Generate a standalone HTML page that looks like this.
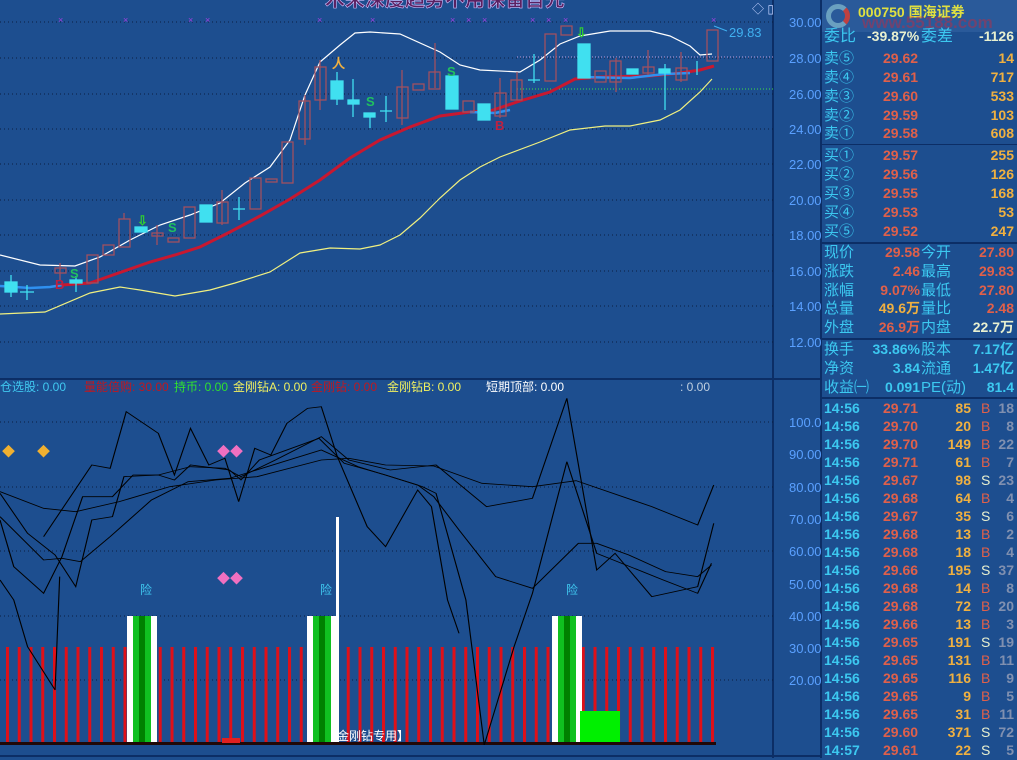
<!DOCTYPE html>
<html><head><meta charset="utf-8"><style>
*{margin:0;padding:0;box-sizing:border-box}
body{width:1017px;height:758px;background:#1d4e8f;overflow:hidden;position:relative;font-family:"Liberation Sans","Noto Sans CJK SC",sans-serif}
svg{position:absolute;left:0;top:0}
.p{position:absolute;left:821px;width:196px;font-size:14px;height:19px;line-height:19px;font-weight:bold}
.p span{position:absolute;white-space:nowrap}
.c{color:#3cc8f0}.r{color:#e0604a}.y{color:#f0b040}.w{color:#e8f0d0}.g{color:#8090b0}
</style></head><body>
<svg width="1017" height="758" viewBox="0 0 1017 758">
<defs>
<pattern id="rb" x="6" y="0" width="11.75" height="10" patternUnits="userSpaceOnUse"><rect x="0" y="0" width="3" height="10" fill="#e01018"/></pattern>
</defs>
<line x1="773" y1="0" x2="773" y2="758" stroke="#0c2e66" stroke-width="2"/>
<line x1="821" y1="0" x2="821" y2="758" stroke="#0c2e66" stroke-width="2"/>
<line x1="0" y1="379" x2="821" y2="379" stroke="#0c2e66" stroke-width="2"/>
<line x1="0" y1="756" x2="821" y2="756" stroke="#0c2e66" stroke-width="2"/>
<g stroke="#0a1e40" stroke-dasharray="1 3" stroke-width="1">
<line x1="0" y1="22" x2="773" y2="22"/><line x1="0" y1="58" x2="773" y2="58"/><line x1="0" y1="94" x2="773" y2="94"/><line x1="0" y1="129" x2="773" y2="129"/><line x1="0" y1="164" x2="773" y2="164"/><line x1="0" y1="200" x2="773" y2="200"/><line x1="0" y1="235" x2="773" y2="235"/><line x1="0" y1="271" x2="773" y2="271"/><line x1="0" y1="306" x2="773" y2="306"/><line x1="0" y1="342" x2="773" y2="342"/>
<line x1="0" y1="422" x2="773" y2="422"/><line x1="0" y1="487" x2="773" y2="487"/><line x1="0" y1="551" x2="773" y2="551"/><line x1="0" y1="616" x2="773" y2="616"/><line x1="0" y1="680" x2="773" y2="680"/>
</g>
<line x1="517" y1="57" x2="773" y2="57" stroke="#c0a0e0" stroke-dasharray="1 2"/>
<line x1="517" y1="89" x2="773" y2="89" stroke="#40e040" stroke-dasharray="1 2"/>
<g fill="#5aa0ff" font-size="13" font-family="Liberation Sans">
<text x="789" y="27">30.00</text><text x="789" y="63">28.00</text><text x="789" y="99">26.00</text><text x="789" y="134">24.00</text><text x="789" y="169">22.00</text><text x="789" y="205">20.00</text><text x="789" y="240">18.00</text><text x="789" y="276">16.00</text><text x="789" y="311">14.00</text><text x="789" y="347">12.00</text>
<text x="789" y="427">100.0</text><text x="789" y="459">90.00</text><text x="789" y="492">80.00</text><text x="789" y="524">70.00</text><text x="789" y="556">60.00</text><text x="789" y="589">50.00</text><text x="789" y="621">40.00</text><text x="789" y="653">30.00</text><text x="789" y="685">20.00</text>
</g>
<text x="752" y="13" fill="#c0d0ff" font-size="12">◇ ▯</text>
<text x="325" y="6" font-size="20" font-weight="bold" fill="#5a2060" stroke="#d0c0ff" stroke-width="0.6" font-family="Liberation Sans,Noto Sans CJK SC,sans-serif">木来深度趋势不用保留首先</text>
<g fill="#a040e0" font-size="9"><text x="58" y="23">×</text><text x="123" y="23">×</text><text x="188" y="23">×</text><text x="205" y="23">×</text><text x="317" y="23">×</text><text x="370" y="23">×</text><text x="450" y="23">×</text><text x="466" y="23">×</text><text x="482" y="23">×</text><text x="530" y="23">×</text><text x="546" y="23">×</text><text x="563" y="23">×</text><text x="711" y="23">×</text></g>
<polyline fill="none" stroke="#ffffff" stroke-width="1.2" points="0,255 40,265 75,266 100,257 130,240 160,225 190,215 220,203 245,183 270,167 290,140 305,95 320,62 340,45 355,33 370,32 400,34 440,52 460,65 480,70 520,72 540,60 560,44 580,36 610,31 650,31 670,36 690,46 700,55 712,54"/>
<polyline fill="none" stroke="#f0f080" stroke-width="1.2" points="0,314 45,312 90,293 120,287 140,290 175,296 210,290 235,283 270,272 300,253 330,248 360,249 380,245 400,235 420,218 440,198 460,180 480,167 500,157 540,142 570,130 605,126 630,126 660,120 680,110 700,92 712,79"/>
<polyline fill="none" stroke="#2f90f0" stroke-width="2.5" points="0,286 30,288 50,287 62,285"/>
<polyline fill="none" stroke="#c81830" stroke-width="3" points="62,285 90,283 110,276 150,262 175,255 200,247 230,232 260,216 290,199 320,180 350,158 380,140 410,127 440,116 470,112 490,111 520,101 550,92 575,79 600,77 650,76 680,73 700,70 714,66"/>
<polyline fill="none" stroke="#2f90f0" stroke-width="2.5" points="470,112 495,113 510,110"/><polyline fill="none" stroke="#2f90f0" stroke-width="2.5" points="580,77 630,78 665,74 690,73"/>
<g stroke="#a05060" stroke-width="1.3" fill="none">
<line x1="60" y1="263" x2="60" y2="280"/><rect x="55" y="268" width="11" height="5"/>
<rect x="87" y="255" width="11" height="28"/><rect x="103" y="245" width="11" height="10"/>
<rect x="119" y="219" width="11" height="28"/><line x1="124" y1="213" x2="124" y2="219"/>
<line x1="157" y1="225" x2="157" y2="245"/><rect x="152" y="233" width="11" height="3"/>
<rect x="168" y="238" width="11" height="4"/><rect x="184" y="207" width="11" height="31"/>
<line x1="222" y1="190" x2="222" y2="225"/><rect x="217" y="202" width="11" height="21"/>
<rect x="250" y="178" width="11" height="31"/><rect x="266" y="179" width="11" height="3"/>
<rect x="282" y="142" width="11" height="41"/><line x1="305" y1="95" x2="305" y2="145"/><rect x="299" y="101" width="11" height="38"/>
<line x1="320" y1="60" x2="320" y2="110"/><rect x="315" y="67" width="11" height="33"/>
<rect x="397" y="87" width="11" height="31"/><line x1="402" y1="70" x2="402" y2="125"/>
<rect x="413" y="84" width="11" height="6"/><line x1="435" y1="43" x2="435" y2="88"/><rect x="429" y="72" width="11" height="17"/>
<rect x="463" y="101" width="11" height="11"/><line x1="500" y1="78" x2="500" y2="118"/><rect x="495" y="93" width="11" height="23"/>
<line x1="517" y1="72" x2="517" y2="100"/><rect x="511" y="80" width="11" height="20"/>
<rect x="545" y="34" width="11" height="47"/><rect x="561" y="26" width="11" height="9"/>
<rect x="595" y="71" width="11" height="11"/><line x1="616" y1="58" x2="616" y2="92"/><rect x="610" y="61" width="11" height="21"/>
<line x1="648" y1="50" x2="648" y2="75"/><rect x="643" y="67" width="11" height="6"/>
<line x1="681" y1="52" x2="681" y2="82"/><rect x="676" y="68" width="11" height="12"/>
<rect x="707" y="30" width="11" height="31"/>
</g>
<g fill="#40e0f0" stroke="#40e0f0" stroke-width="1.3">
<rect x="5" y="282" width="12" height="10"/><line x1="11" y1="275" x2="11" y2="297"/>
<line x1="20" y1="292" x2="34" y2="292"/><line x1="27" y1="285" x2="27" y2="300"/>
<rect x="70" y="280" width="12" height="3"/><line x1="76" y1="276" x2="76" y2="292"/>
<rect x="135" y="227" width="12" height="5"/><rect x="200" y="205" width="12" height="17"/>
<line x1="233" y1="209" x2="245" y2="209"/><line x1="239" y1="197" x2="239" y2="220"/>
<rect x="331" y="81" width="12" height="18"/><line x1="337" y1="72" x2="337" y2="105"/>
<rect x="348" y="100" width="11" height="4"/><line x1="353" y1="79" x2="353" y2="117"/>
<rect x="364" y="113" width="11" height="4"/><line x1="370" y1="113" x2="370" y2="128"/>
<line x1="380" y1="111" x2="392" y2="111"/><line x1="386" y1="96" x2="386" y2="122"/>
<rect x="446" y="76" width="12" height="33"/><rect x="478" y="104" width="12" height="16"/>
<line x1="528" y1="80" x2="540" y2="80"/><line x1="534" y1="54" x2="534" y2="83"/>
<rect x="578" y="44" width="12" height="34"/><rect x="627" y="69" width="11" height="5"/>
<rect x="659" y="69" width="11" height="4"/><line x1="665" y1="64" x2="665" y2="110"/>
<line x1="697" y1="61" x2="697" y2="75"/>
</g>
<g font-size="13" font-weight="bold" font-family="Liberation Sans">
<text x="70" y="278" fill="#20c060">S</text><text x="168" y="232" fill="#20c060">S</text><text x="366" y="106" fill="#20c060">S</text><text x="447" y="76" fill="#20c060">S</text>
<text x="55" y="289" fill="#c02040">B</text><text x="495" y="130" fill="#c02040">B</text>
<text x="137" y="225" fill="#30d030">⇩</text><text x="332" y="68" fill="#f0b040">人</text><text x="576" y="37" fill="#30d030">⇩</text>
</g>
<text x="729" y="37" fill="#40b0f0" font-size="13">29.83</text>
<line x1="714" y1="26" x2="727" y2="31" stroke="#40b0f0"/>
<g font-size="12" font-family="Liberation Sans,Noto Sans CJK SC,sans-serif">
<text x="0" y="391" fill="#40c8f0">仓选股: 0.00</text>
<text x="84" y="391" fill="#c01820">量能倍购: 30.00</text>
<text x="174" y="391" fill="#30e030">持币: 0.00</text>
<text x="233" y="391" fill="#f0f060">金刚钻A: 0.00</text>
<text x="311" y="391" fill="#c01820">金刚钻: 0.00</text>
<text x="387" y="391" fill="#f0f060">金刚钻B: 0.00</text>
<text x="486" y="391" fill="#ffffff">短期顶部: 0.00</text>
<text x="680" y="391" fill="#c0d0e0">: 0.00</text>
</g>
<rect x="6" y="647" width="710" height="96" fill="url(#rb)"/>
<g>
<rect x="127" y="616" width="30" height="128" fill="#fff"/><rect x="133" y="616" width="18" height="128" fill="#10c020"/><rect x="139" y="616" width="6" height="128" fill="#008000"/>
<rect x="307" y="616" width="30" height="128" fill="#fff"/><rect x="313" y="616" width="18" height="128" fill="#10c020"/><rect x="319" y="616" width="6" height="128" fill="#008000"/>
<rect x="552" y="616" width="30" height="128" fill="#fff"/><rect x="558" y="616" width="18" height="128" fill="#10c020"/><rect x="564" y="616" width="6" height="128" fill="#008000"/>
<rect x="336" y="517" width="3" height="227" fill="#fff"/>
<rect x="580" y="711" width="40" height="33" fill="#00f000"/>
</g>
<rect x="0" y="742" width="716" height="3" fill="#200808"/>
<g fill="#40c8f0" font-size="12" font-family="Noto Sans CJK SC,sans-serif"><text x="140" y="594">险</text><text x="320" y="594">险</text><text x="566" y="594">险</text></g>
<text x="325" y="740" fill="#ffffff" font-size="12" font-family="Noto Sans CJK SC,sans-serif">【金刚钻专用】</text>
<g font-size="13"><text x="2" y="456" fill="#f0b030">◆</text><text x="37" y="456" fill="#f0b030">◆</text><text x="217" y="456" fill="#f070c0">◆◆</text><text x="217" y="583" fill="#f070c0">◆◆</text><rect x="222" y="738" width="18" height="5" fill="#e02020"/></g>
<g transform="translate(0,380) scale(0.459,0.3333)" fill="none" stroke="#000" stroke-width="2.5">
<polyline points="95,470 200,255 240,265 275,95 345,160 380,285 415,145 455,255 490,235 520,365 555,205 590,225 625,130 670,85 700,80 735,230 800,440 840,500 910,330 940,380 975,660 1000,760"/>
<polyline points="0,335 95,385 165,395 260,365 370,320 470,300 560,290 700,240 760,235 840,255 945,258 1050,310 1160,320 1255,302 1420,380 1520,435 1555,315"/>
<polyline points="0,410 95,540 135,535 175,545 240,470 330,360 410,305 500,295 700,210 780,260 910,315 945,350 1000,450 1080,590 1160,625 1260,490 1300,490 1370,525 1450,575 1520,590 1550,555"/>
<polyline points="0,340 60,460 120,525 165,620 200,420 245,410 270,290 345,285 380,300 415,255 500,270 525,300 565,240 695,175 750,250 840,285 920,320 950,340 1015,660 1055,1095"/>
<polyline points="0,420 30,560 95,640 135,530 180,350 245,350 290,285 345,285 415,260 490,265 525,290 600,240 700,170 760,240 850,270 950,255 1060,380 1160,355 1235,55 1300,570 1340,520 1420,650 1520,620 1555,430"/>
<polyline points="1055,1095 1120,800 1160,640 1235,245 1300,520 1445,600 1520,640 1550,550"/>
<polyline points="0,600 30,660 60,800 120,930 130,590"/>
</g>
</svg>
<div style="position:absolute;left:822px;top:0;width:195px;height:32px;background:#2a5a9a"></div>
<div style="position:absolute;left:826px;top:4px;width:24px;height:24px;border-radius:50%;border:5px solid #6aa0c0;border-right-color:#c04040"></div>
<div style="position:absolute;left:858px;top:2px;font-size:14px;font-weight:bold;color:#e0e040;font-family:'Liberation Sans','Noto Sans CJK SC',sans-serif">000750 国海证券</div>
<div style="position:absolute;left:862px;top:13px;font-size:17px;font-weight:bold;color:rgba(200,40,60,.45);font-family:'Liberation Sans',sans-serif">www.55188.com</div>
<div style="position:absolute;left:822px;top:144px;width:195px;height:1px;background:#0c2e66"></div>
<div style="position:absolute;left:822px;top:242px;width:195px;height:2px;background:#0c2e66"></div>
<div style="position:absolute;left:822px;top:338px;width:195px;height:2px;background:#0c2e66"></div>
<div style="position:absolute;left:822px;top:397px;width:195px;height:2px;background:#0c2e66"></div>
<div class="p" style="top:27px;font-weight:normal;font-size:16px"><span class="c" style="left:3px">委比</span><span class="w" style="left:46px;font-size:14px;font-weight:bold">-39.87%</span><span class="c" style="left:100px">委差</span><span class="w" style="right:3px;font-size:14px;font-weight:bold">-1126</span></div>
<div class="p" style="top:49px"><span class="c" style="left:3px;font-weight:normal;font-size:15px">卖⑤</span><span class="r" style="left:62px">29.62</span><span class="y" style="right:3px">14</span></div>
<div class="p" style="top:68px"><span class="c" style="left:3px;font-weight:normal;font-size:15px">卖④</span><span class="r" style="left:62px">29.61</span><span class="y" style="right:3px">717</span></div>
<div class="p" style="top:87px"><span class="c" style="left:3px;font-weight:normal;font-size:15px">卖③</span><span class="r" style="left:62px">29.60</span><span class="y" style="right:3px">533</span></div>
<div class="p" style="top:106px"><span class="c" style="left:3px;font-weight:normal;font-size:15px">卖②</span><span class="r" style="left:62px">29.59</span><span class="y" style="right:3px">103</span></div>
<div class="p" style="top:124px"><span class="c" style="left:3px;font-weight:normal;font-size:15px">卖①</span><span class="r" style="left:62px">29.58</span><span class="y" style="right:3px">608</span></div>
<div class="p" style="top:146px"><span class="c" style="left:3px;font-weight:normal;font-size:15px">买①</span><span class="r" style="left:62px">29.57</span><span class="y" style="right:3px">255</span></div>
<div class="p" style="top:165px"><span class="c" style="left:3px;font-weight:normal;font-size:15px">买②</span><span class="r" style="left:62px">29.56</span><span class="y" style="right:3px">126</span></div>
<div class="p" style="top:184px"><span class="c" style="left:3px;font-weight:normal;font-size:15px">买③</span><span class="r" style="left:62px">29.55</span><span class="y" style="right:3px">168</span></div>
<div class="p" style="top:203px"><span class="c" style="left:3px;font-weight:normal;font-size:15px">买④</span><span class="r" style="left:62px">29.53</span><span class="y" style="right:3px">53</span></div>
<div class="p" style="top:222px"><span class="c" style="left:3px;font-weight:normal;font-size:15px">买⑤</span><span class="r" style="left:62px">29.52</span><span class="y" style="right:3px">247</span></div>
<div class="p" style="top:243px"><span class="c" style="left:3px;font-weight:normal;font-size:15px">现价</span><span class="r" style="right:97px">29.58</span><span class="c" style="left:100px;font-weight:normal;font-size:15px">今开</span><span class="r" style="right:3px">27.80</span></div>
<div class="p" style="top:262px"><span class="c" style="left:3px;font-weight:normal;font-size:15px">涨跌</span><span class="r" style="right:97px">2.46</span><span class="c" style="left:100px;font-weight:normal;font-size:15px">最高</span><span class="r" style="right:3px">29.83</span></div>
<div class="p" style="top:281px"><span class="c" style="left:3px;font-weight:normal;font-size:15px">涨幅</span><span class="r" style="right:97px">9.07%</span><span class="c" style="left:100px;font-weight:normal;font-size:15px">最低</span><span class="r" style="right:3px">27.80</span></div>
<div class="p" style="top:299px"><span class="c" style="left:3px;font-weight:normal;font-size:15px">总量</span><span class="y" style="right:97px">49.6万</span><span class="c" style="left:100px;font-weight:normal;font-size:15px">量比</span><span class="r" style="right:3px">2.48</span></div>
<div class="p" style="top:318px"><span class="c" style="left:3px;font-weight:normal;font-size:15px">外盘</span><span class="r" style="right:97px">26.9万</span><span class="c" style="left:100px;font-weight:normal;font-size:15px">内盘</span><span class="w" style="right:3px">22.7万</span></div>
<div class="p" style="top:340px"><span class="c" style="left:3px;font-weight:normal;font-size:15px">换手</span><span class="c" style="right:97px">33.86%</span><span class="c" style="left:100px;font-weight:normal;font-size:15px">股本</span><span class="c" style="right:3px">7.17亿</span></div>
<div class="p" style="top:359px"><span class="c" style="left:3px;font-weight:normal;font-size:15px">净资</span><span class="c" style="right:97px">3.84</span><span class="c" style="left:100px;font-weight:normal;font-size:15px">流通</span><span class="c" style="right:3px">1.47亿</span></div>
<div class="p" style="top:378px"><span class="c" style="left:3px;font-weight:normal;font-size:15px">收益㈠</span><span class="c" style="right:97px">0.091</span><span class="c" style="left:100px;font-weight:normal;font-size:15px">PE(动)</span><span class="c" style="right:3px">81.4</span></div>
<div class="p" style="top:399px"><span class="c" style="left:3px">14:56</span><span class="r" style="left:62px">29.71</span><span class="y" style="right:46px">85</span><span class="r" style="left:160px;font-weight:normal">B</span><span class="g" style="right:3px">18</span></div>
<div class="p" style="top:417px"><span class="c" style="left:3px">14:56</span><span class="r" style="left:62px">29.70</span><span class="y" style="right:46px">20</span><span class="r" style="left:160px;font-weight:normal">B</span><span class="g" style="right:3px">8</span></div>
<div class="p" style="top:435px"><span class="c" style="left:3px">14:56</span><span class="r" style="left:62px">29.70</span><span class="y" style="right:46px">149</span><span class="r" style="left:160px;font-weight:normal">B</span><span class="g" style="right:3px">22</span></div>
<div class="p" style="top:453px"><span class="c" style="left:3px">14:56</span><span class="r" style="left:62px">29.71</span><span class="y" style="right:46px">61</span><span class="r" style="left:160px;font-weight:normal">B</span><span class="g" style="right:3px">7</span></div>
<div class="p" style="top:471px"><span class="c" style="left:3px">14:56</span><span class="r" style="left:62px">29.67</span><span class="y" style="right:46px">98</span><span class="w" style="left:160px;font-weight:normal">S</span><span class="g" style="right:3px">23</span></div>
<div class="p" style="top:489px"><span class="c" style="left:3px">14:56</span><span class="r" style="left:62px">29.68</span><span class="y" style="right:46px">64</span><span class="r" style="left:160px;font-weight:normal">B</span><span class="g" style="right:3px">4</span></div>
<div class="p" style="top:507px"><span class="c" style="left:3px">14:56</span><span class="r" style="left:62px">29.67</span><span class="y" style="right:46px">35</span><span class="w" style="left:160px;font-weight:normal">S</span><span class="g" style="right:3px">6</span></div>
<div class="p" style="top:525px"><span class="c" style="left:3px">14:56</span><span class="r" style="left:62px">29.68</span><span class="y" style="right:46px">13</span><span class="r" style="left:160px;font-weight:normal">B</span><span class="g" style="right:3px">2</span></div>
<div class="p" style="top:543px"><span class="c" style="left:3px">14:56</span><span class="r" style="left:62px">29.68</span><span class="y" style="right:46px">18</span><span class="r" style="left:160px;font-weight:normal">B</span><span class="g" style="right:3px">4</span></div>
<div class="p" style="top:561px"><span class="c" style="left:3px">14:56</span><span class="r" style="left:62px">29.66</span><span class="y" style="right:46px">195</span><span class="w" style="left:160px;font-weight:normal">S</span><span class="g" style="right:3px">37</span></div>
<div class="p" style="top:579px"><span class="c" style="left:3px">14:56</span><span class="r" style="left:62px">29.68</span><span class="y" style="right:46px">14</span><span class="r" style="left:160px;font-weight:normal">B</span><span class="g" style="right:3px">8</span></div>
<div class="p" style="top:597px"><span class="c" style="left:3px">14:56</span><span class="r" style="left:62px">29.68</span><span class="y" style="right:46px">72</span><span class="r" style="left:160px;font-weight:normal">B</span><span class="g" style="right:3px">20</span></div>
<div class="p" style="top:615px"><span class="c" style="left:3px">14:56</span><span class="r" style="left:62px">29.66</span><span class="y" style="right:46px">13</span><span class="r" style="left:160px;font-weight:normal">B</span><span class="g" style="right:3px">3</span></div>
<div class="p" style="top:633px"><span class="c" style="left:3px">14:56</span><span class="r" style="left:62px">29.65</span><span class="y" style="right:46px">191</span><span class="w" style="left:160px;font-weight:normal">S</span><span class="g" style="right:3px">19</span></div>
<div class="p" style="top:651px"><span class="c" style="left:3px">14:56</span><span class="r" style="left:62px">29.65</span><span class="y" style="right:46px">131</span><span class="r" style="left:160px;font-weight:normal">B</span><span class="g" style="right:3px">11</span></div>
<div class="p" style="top:669px"><span class="c" style="left:3px">14:56</span><span class="r" style="left:62px">29.65</span><span class="y" style="right:46px">116</span><span class="r" style="left:160px;font-weight:normal">B</span><span class="g" style="right:3px">9</span></div>
<div class="p" style="top:687px"><span class="c" style="left:3px">14:56</span><span class="r" style="left:62px">29.65</span><span class="y" style="right:46px">9</span><span class="r" style="left:160px;font-weight:normal">B</span><span class="g" style="right:3px">5</span></div>
<div class="p" style="top:705px"><span class="c" style="left:3px">14:56</span><span class="r" style="left:62px">29.65</span><span class="y" style="right:46px">31</span><span class="r" style="left:160px;font-weight:normal">B</span><span class="g" style="right:3px">11</span></div>
<div class="p" style="top:723px"><span class="c" style="left:3px">14:56</span><span class="r" style="left:62px">29.60</span><span class="y" style="right:46px">371</span><span class="w" style="left:160px;font-weight:normal">S</span><span class="g" style="right:3px">72</span></div>
<div class="p" style="top:741px"><span class="c" style="left:3px">14:57</span><span class="r" style="left:62px">29.61</span><span class="y" style="right:46px">22</span><span class="w" style="left:160px;font-weight:normal">S</span><span class="g" style="right:3px">5</span></div>
</body></html>
